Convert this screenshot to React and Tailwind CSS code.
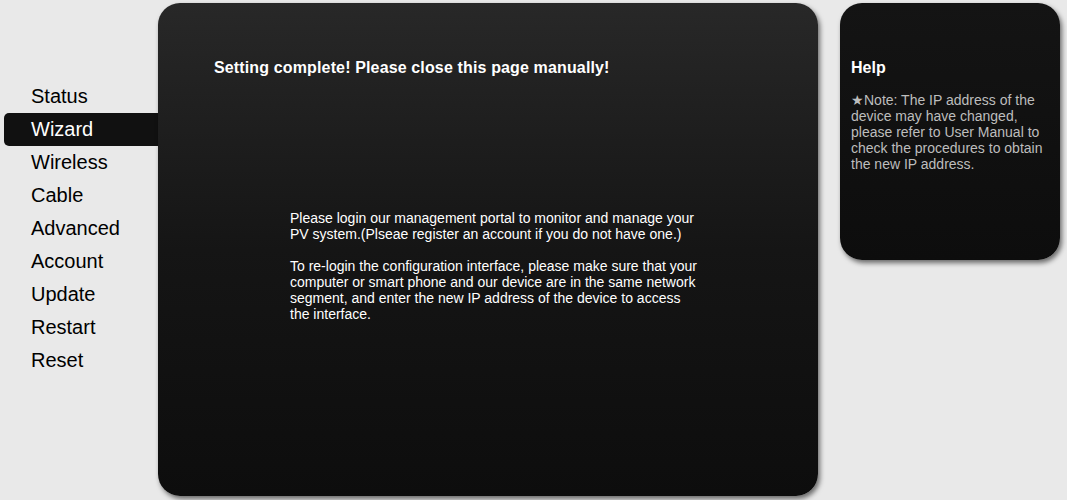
import React from "react";

const NAV_ITEMS = ["Status", "Wizard", "Wireless", "Cable", "Advanced", "Account", "Update", "Restart", "Reset"];

const App = () => {
  const active = "Wizard";

  return (
    <div
      className="flex h-[500px] w-[1067px] bg-[#e9e9e9] pt-[3px]"
      style={{ fontFamily: '"Liberation Sans", Arial, sans-serif' }}
    >
      <ul className="w-[158px] shrink-0 pl-[4px] pt-[77px]">
        {NAV_ITEMS.map((item) => (
          <li
            key={item}
            className={`h-[33px] rounded-l-[5px] pl-[27px] text-[20px] leading-[33px] ${
              item === active ? "bg-[#111111] text-white" : "text-black"
            }`}
          >
            {item}
          </li>
        ))}
      </ul>

      <div className="h-[493px] w-[660px] shrink-0 rounded-[22px] bg-gradient-to-b from-[#282828] via-[#151515] to-[#0d0d0d] pl-[56px] pt-[55px] shadow-[2px_3px_5px_rgba(0,0,0,0.55)]">
        <h2 className="text-[16px] font-bold leading-[19px] tracking-[0.14px] text-white">
          Setting complete! Please close this page manually!
        </h2>
        <div className="ml-[76px] mt-[133px] w-[412px] text-[14px] leading-[16px] text-white">
          <p>
            Please login our management portal to monitor and manage your PV system.(Plseae register an account if you
            do not have one.)
          </p>
          <p className="mt-[16px]">
            To re-login the configuration interface, please make sure that your computer or smart phone and our device
            are in the same network segment, and enter the new IP address of the device to access the interface.
          </p>
        </div>
      </div>

      <div className="ml-[22px] h-[257px] w-[220px] shrink-0 rounded-[22px] bg-gradient-to-b from-[#141414] to-[#0d0d0d] pl-[11px] pr-[10px] pt-[55px] shadow-[2px_3px_5px_rgba(0,0,0,0.55)]">
        <h3 className="text-[16px] font-bold leading-[19px] text-white">Help</h3>
        <p className="mt-[15px] text-[14px] leading-[16px] text-[#bdbdbd]">
          ★Note: The IP address of the device may have changed, please refer to User Manual to check the procedures to
          obtain the new IP address.
        </p>
      </div>
    </div>
  );
};

export default App;
